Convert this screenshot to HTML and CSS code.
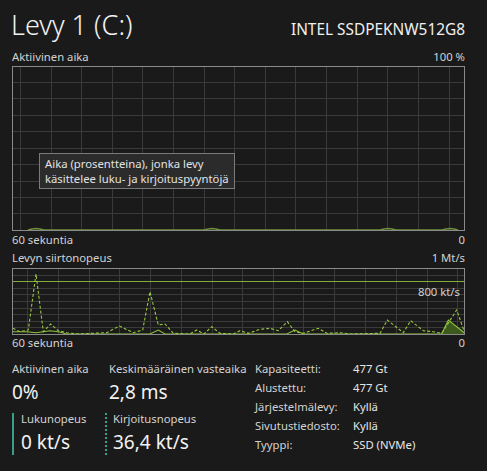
FILE: index.html
```html
<!DOCTYPE html>
<html lang="fi">
<head>
<meta charset="utf-8">
<link rel="stylesheet" href="styles.css">
</head>
<body>
<div class="page">
  <header class="head">
    <h1 class="title">Levy 1 (C:)</h1>
    <div class="model">INTEL SSDPEKNW512G8</div>
  </header>

  <div class="axis axis-top"><span>Aktiivinen aika</span><span>100 %</span></div>
  <div class="graph graph-active">
    <svg class="chart" width="453" height="165" viewBox="0 0 453 165">
      <g class="grid">
        <line x1="8.5" y1="0" x2="8.5" y2="165"/><line x1="39.5" y1="0" x2="39.5" y2="165"/>
        <line x1="69.5" y1="0" x2="69.5" y2="165"/><line x1="100.5" y1="0" x2="100.5" y2="165"/>
        <line x1="130.5" y1="0" x2="130.5" y2="165"/><line x1="161.5" y1="0" x2="161.5" y2="165"/>
        <line x1="192.5" y1="0" x2="192.5" y2="165"/><line x1="222.5" y1="0" x2="222.5" y2="165"/>
        <line x1="253.5" y1="0" x2="253.5" y2="165"/><line x1="283.5" y1="0" x2="283.5" y2="165"/>
        <line x1="314.5" y1="0" x2="314.5" y2="165"/><line x1="345.5" y1="0" x2="345.5" y2="165"/>
        <line x1="375.5" y1="0" x2="375.5" y2="165"/><line x1="406.5" y1="0" x2="406.5" y2="165"/>
        <line x1="437.5" y1="0" x2="437.5" y2="165"/>
        <line x1="0" y1="16.5" x2="453" y2="16.5"/><line x1="0" y1="32.5" x2="453" y2="32.5"/>
        <line x1="0" y1="49.5" x2="453" y2="49.5"/><line x1="0" y1="65.5" x2="453" y2="65.5"/>
        <line x1="0" y1="82.5" x2="453" y2="82.5"/><line x1="0" y1="98.5" x2="453" y2="98.5"/>
        <line x1="0" y1="115.5" x2="453" y2="115.5"/><line x1="0" y1="131.5" x2="453" y2="131.5"/>
        <line x1="0" y1="147.5" x2="453" y2="147.5"/>
      </g>
      <polyline class="blip" points="16,164 20,163 24,162.5 28,163 32,164 192,164 196,163 200,162.5 204,163 208,164 368,164 372,163 376,162.5 380,163 384,164 430,164 434,163 438,162.5 442,163 446,164"/>
      <rect class="frame" x="0.5" y="0.5" width="452" height="164"/>
    </svg>
    <div class="tip">Aika (prosentteina), jonka levy<br>käsittelee luku- ja kirjoituspyyntöjä</div>
  </div>
  <div class="axis"><span>60 sekuntia</span><span>0</span></div>

  <div class="axis"><span>Levyn siirtonopeus</span><span>1 Mt/s</span></div>
  <div class="graph graph-rate">
    <svg class="chart" width="453" height="67" viewBox="0 0 453 67">
      <g class="grid">
        <line x1="15.5" y1="0" x2="15.5" y2="67"/><line x1="46.5" y1="0" x2="46.5" y2="67"/>
        <line x1="77.5" y1="0" x2="77.5" y2="67"/><line x1="107.5" y1="0" x2="107.5" y2="67"/>
        <line x1="138.5" y1="0" x2="138.5" y2="67"/><line x1="169.5" y1="0" x2="169.5" y2="67"/>
        <line x1="200.5" y1="0" x2="200.5" y2="67"/><line x1="230.5" y1="0" x2="230.5" y2="67"/>
        <line x1="261.5" y1="0" x2="261.5" y2="67"/><line x1="291.5" y1="0" x2="291.5" y2="67"/>
        <line x1="322.5" y1="0" x2="322.5" y2="67"/><line x1="353.5" y1="0" x2="353.5" y2="67"/>
        <line x1="384.5" y1="0" x2="384.5" y2="67"/><line x1="415.5" y1="0" x2="415.5" y2="67"/>
        <line x1="445.5" y1="0" x2="445.5" y2="67"/>
        <line x1="0" y1="7.5" x2="453" y2="7.5"/><line x1="0" y1="20.5" x2="453" y2="20.5"/>
        <line x1="0" y1="26.5" x2="453" y2="26.5"/><line x1="0" y1="33.5" x2="453" y2="33.5"/>
        <line x1="0" y1="40.5" x2="453" y2="40.5"/><line x1="0" y1="46.5" x2="453" y2="46.5"/>
        <line x1="0" y1="53.5" x2="453" y2="53.5"/><line x1="0" y1="59.5" x2="453" y2="59.5"/>
      </g>
      <line class="limit" x1="0" y1="13.5" x2="453" y2="13.5"/>
      <polygon class="fill" points="429.7,66 436.3,52 452,64.7 452,66"/>
      <polyline class="read" points="0.7,63.7 14.7,63.7 24,64.7 38,62.7 46.3,63.7 54.7,66 138,66 146.3,62 153,66 274.7,66 283,62 291.3,66 429.7,66 436.3,52 452.3,64.7"/>
      <polyline class="write" points="0.7,60.3 8,63.7 16.3,62 24,6 31.3,63.7 38.7,56 46.3,62.7 54.7,64.7 64.7,66 94.7,64.7 107.3,58 121.3,64.7 130.7,62 138,23.7 146.3,57 153,56 161.3,65.3 178,66 184.7,62 192,66 199.7,58.7 208,65.3 221.3,66 228,62.7 236.3,65.3 248,61.3 258,60.3 266.3,62.7 275.3,53.7 283,63.7 291.3,65.3 306.3,60.3 314.7,65.3 328,64.7 338,66 368,65.3 375.3,52 391.3,64.7 398.7,52.7 411.3,62.7 421.3,63.7 429.7,65.3 444.7,42 452.3,63.7"/>
      <rect class="frame" x="0.5" y="0.5" width="452" height="66"/>
    </svg>
    <span class="mark">800 kt/s</span>
  </div>
  <div class="axis"><span>60 sekuntia</span><span>0</span></div>

  <section class="stats">
    <div class="col col-a">
      <div class="stat">
        <div class="lbl">Aktiivinen aika</div>
        <div class="val">0%</div>
      </div>
      <div class="stat io io-read">
        <div class="lbl">Lukunopeus</div>
        <div class="val">0 kt/s</div>
      </div>
    </div>
    <div class="col col-b">
      <div class="stat">
        <div class="lbl">Keskimääräinen vasteaika</div>
        <div class="val">2,8 ms</div>
      </div>
      <div class="stat io io-write">
        <div class="lbl">Kirjoitusnopeus</div>
        <div class="val">36,4 kt/s</div>
      </div>
    </div>
    <dl class="props">
      <dt>Kapasiteetti:</dt><dd>477 Gt</dd>
      <dt>Alustettu:</dt><dd>477 Gt</dd>
      <dt>Järjestelmälevy:</dt><dd>Kyllä</dd>
      <dt>Sivutustiedosto:</dt><dd>Kyllä</dd>
      <dt>Tyyppi:</dt><dd>SSD (NVMe)</dd>
    </dl>
  </section>
</div>
</body>
</html>
```

FILE: styles.css
```css
html, body {
  margin: 0;
  padding: 0;
  background: #1a1a1a;
}
body {
  font-family: "Noto Sans", "Open Sans", sans-serif;
  color: #d4d4d4;
  font-size: 11.3px;
}
.page {
  width: 453px;
  padding: 0 22px 0 12px;
}
.head {
  display: flex;
  justify-content: space-between;
  align-items: baseline;
  padding-top: 9px;
  height: 40px;
}
.title {
  margin: 0 0 0 -1px;
  font-size: 27px;
  font-weight: 300;
  line-height: 32px;
  color: #f2f2f2;
}
.model {
  font-size: 15.4px;
  color: #f0f0f0;
  line-height: 20px;
}
.axis {
  display: flex;
  justify-content: space-between;
  line-height: 16px;
  height: 16px;
  color: #d2d2d2;
}
.axis-top { margin-bottom: 1px; }
.graph {
  position: relative;
  margin-bottom: 1px;
}
.graph-rate { margin-top: 2px; margin-bottom: 0; }
.axis + .axis { margin-top: 2px; }
.chart { display: block; }
.grid line {
  stroke: #3a3a3a;
  stroke-width: 1;
}
.frame {
  fill: none;
  stroke: #8a8a8a;
  stroke-width: 1;
}
.blip {
  fill: none;
  stroke: #6f8f3a;
  stroke-width: 1.5;
}
.limit {
  stroke: #7fae3c;
  stroke-width: 1.2;
}
.fill { fill: #3b5a1c; }
.read {
  fill: none;
  stroke: #8fc23f;
  stroke-width: 1.1;
}
.write {
  fill: none;
  stroke: #98c840;
  stroke-width: 1.1;
  stroke-dasharray: 3 2;
}
.tip {
  position: absolute;
  left: 27px;
  top: 87px;
  padding: 2px 5px 2px 5px;
  background: #2b2b2b;
  border: 1px solid #7a7a7a;
  color: #e2e2e2;
  font-size: 11.3px;
  line-height: 15px;
  white-space: nowrap;
}
.mark {
  position: absolute;
  right: 5px;
  top: 16px;
  font-size: 11.3px;
  line-height: 16px;
  color: #d0d0d0;
}
.stats {
  display: grid;
  grid-template-columns: 97px 146px 1fr;
  margin-top: 10px;
}
.stat { display: flex; flex-direction: column; }
.lbl {
  line-height: 16px;
  color: #d2d2d2;
  white-space: nowrap;
}
.val {
  font-size: 19px;
  line-height: 24px;
  padding-top: 3px;
  color: #f2f2f2;
  white-space: nowrap;
}
.io {
  margin-top: 9px;
  padding-left: 7px;
  border-left: 2px solid #3a9e8f;
}
.io .lbl { line-height: 12px; }
.io .val { line-height: 26px; padding-top: 4px; font-size: 19px; }
.io-write {
  margin-left: -4px;
  padding-left: 6px;
  border-left: 2px dotted #3a9e8f;
}
.props {
  display: grid;
  grid-template-columns: 98px 1fr;
  margin: -1px 0 0;
  line-height: 18px;
  color: #d2d2d2;
}
.props dt, .props dd { margin: 0; white-space: nowrap; }
.props dd { color: #e6e6e6; }
```
